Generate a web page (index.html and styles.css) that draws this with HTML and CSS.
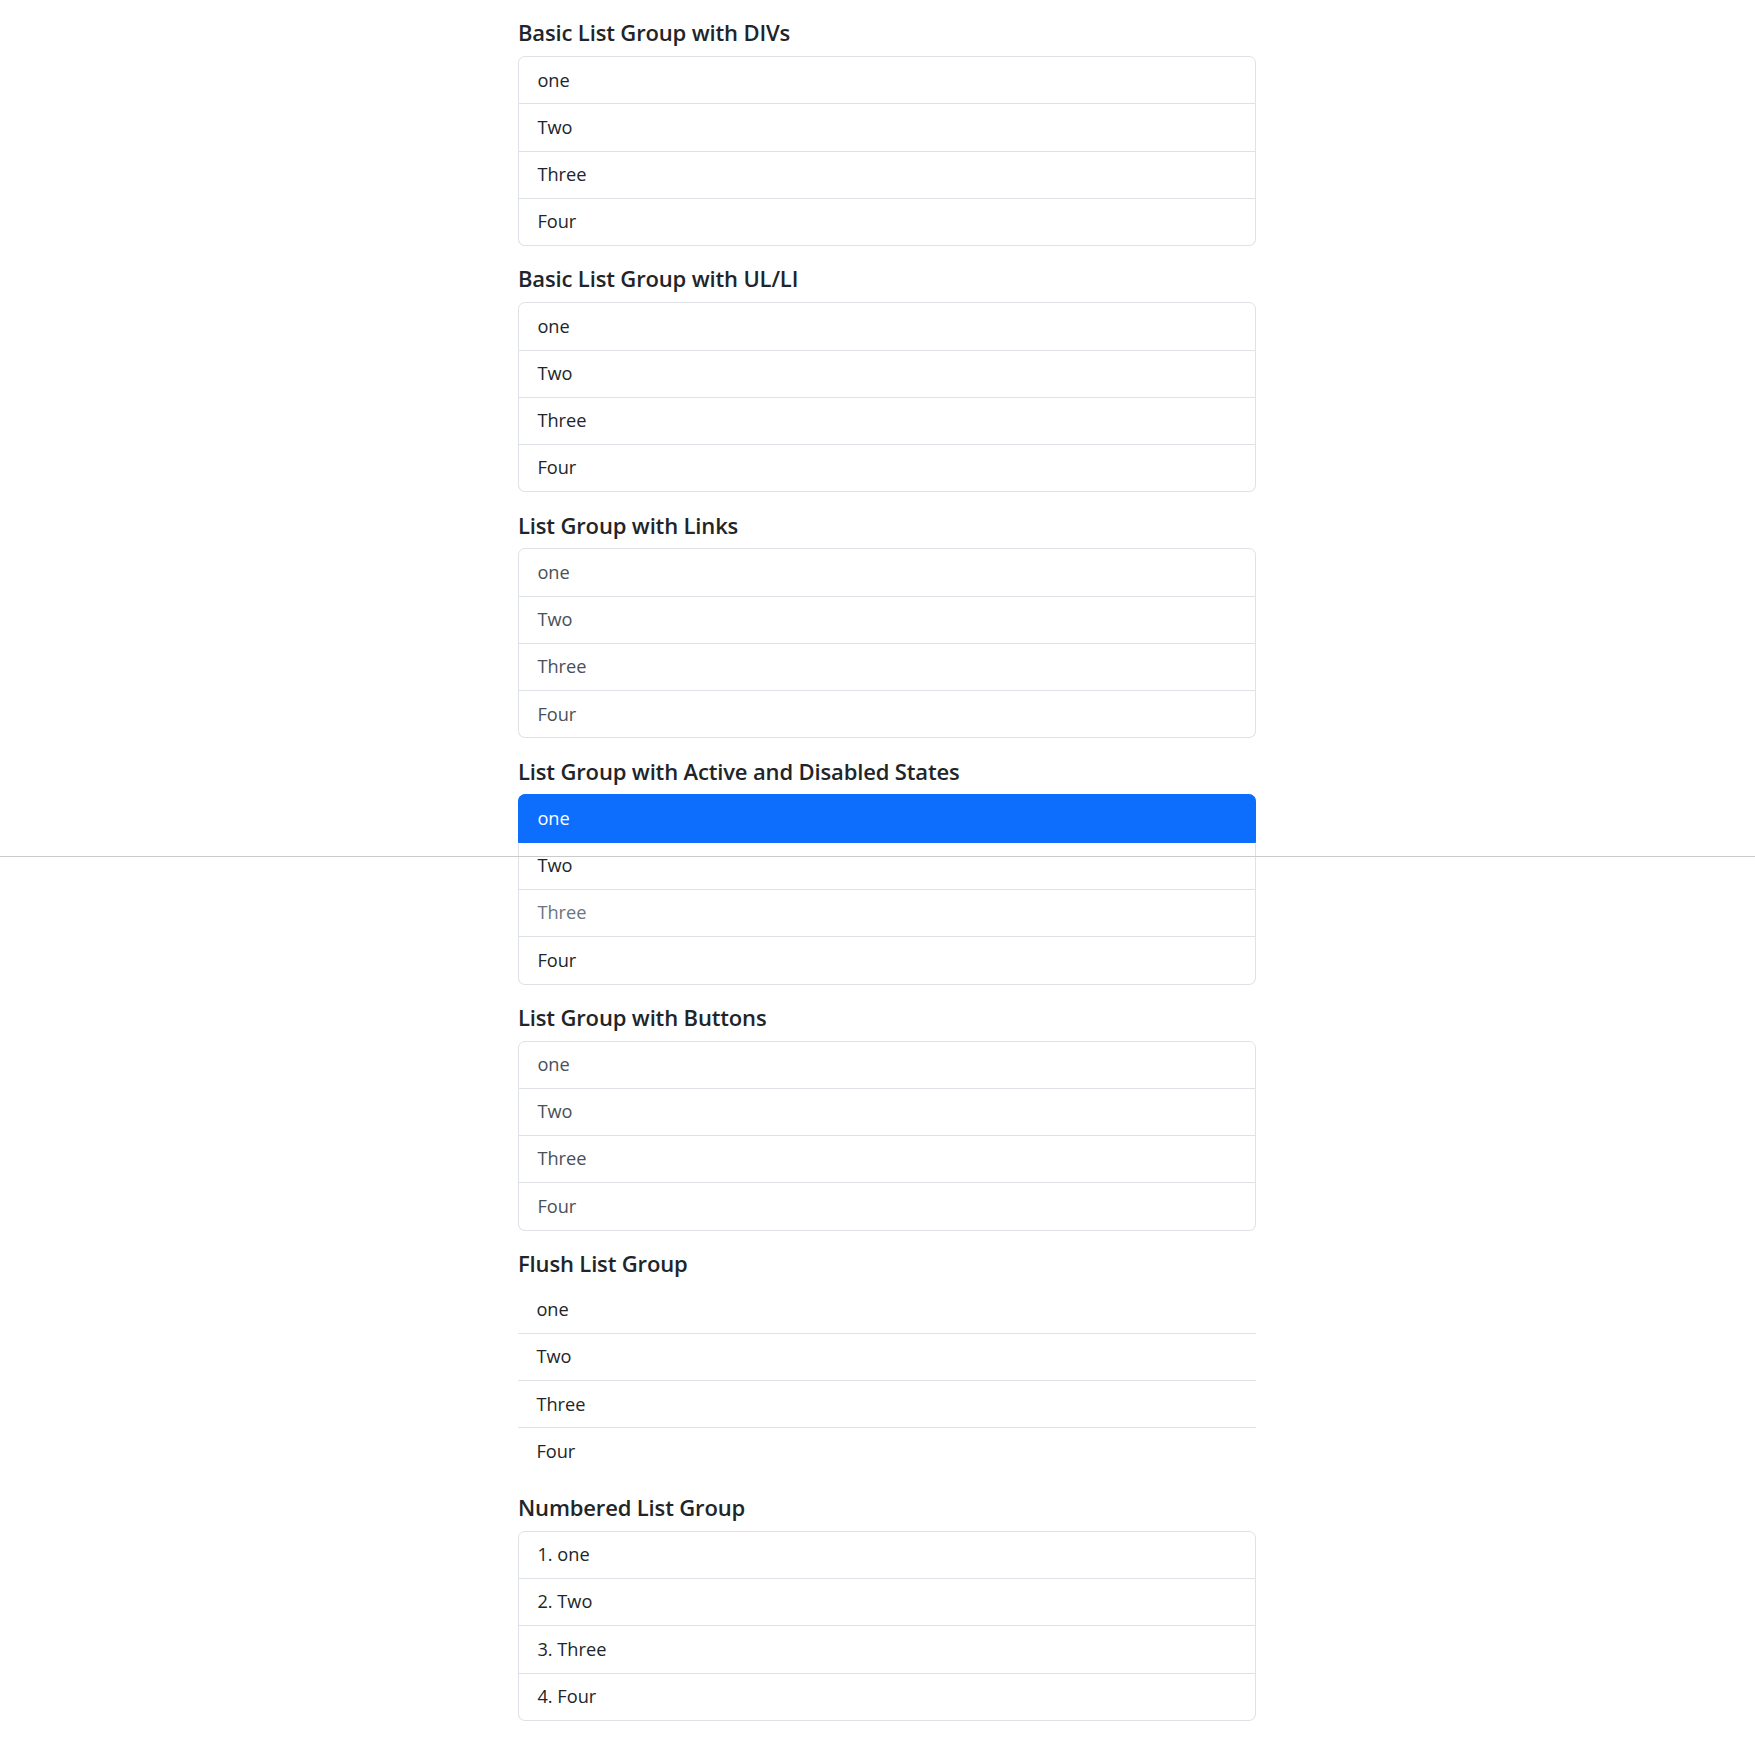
FILE: index.html
```html
<!DOCTYPE html>
<html lang="en">
<head>
<meta charset="utf-8">
<title>List Groups</title>
<link rel="stylesheet" href="styles.css">
</head>
<body>
<div class="page">
  <h5 class="title">Basic List Group with DIVs</h5>
  <div class="list">
    <div class="item">one</div>
    <div class="item">Two</div>
    <div class="item">Three</div>
    <div class="item">Four</div>
  </div>

  <h5 class="title">Basic List Group with UL/LI</h5>
  <ul class="list">
    <li class="item">one</li>
    <li class="item">Two</li>
    <li class="item">Three</li>
    <li class="item">Four</li>
  </ul>

  <h5 class="title">List Group with Links</h5>
  <div class="list">
    <a href="#" class="item action">one</a>
    <a href="#" class="item action">Two</a>
    <a href="#" class="item action">Three</a>
    <a href="#" class="item action">Four</a>
  </div>

  <h5 class="title">List Group with Active and Disabled States</h5>
  <ul class="list">
    <li class="item active">one</li>
    <li class="item">Two</li>
    <li class="item disabled">Three</li>
    <li class="item">Four</li>
  </ul>

  <h5 class="title">List Group with Buttons</h5>
  <div class="list">
    <button type="button" class="item action">one</button>
    <button type="button" class="item action">Two</button>
    <button type="button" class="item action">Three</button>
    <button type="button" class="item action">Four</button>
  </div>

  <h5 class="title">Flush List Group</h5>
  <ul class="list flush">
    <li class="item">one</li>
    <li class="item">Two</li>
    <li class="item">Three</li>
    <li class="item">Four</li>
  </ul>

  <h5 class="title">Numbered List Group</h5>
  <ol class="list numbered">
    <li class="item">one</li>
    <li class="item">Two</li>
    <li class="item">Three</li>
    <li class="item">Four</li>
  </ol>
</div>
<div class="divider"></div>
</body>
</html>
```
FILE: styles.css
```css
html, body {
  margin: 0;
  padding: 0;
  background: #fff;
}
body {
  font-family: "Open Sans", "Noto Sans", "Liberation Sans", sans-serif;
  color: #212529;
  font-size: 18.2px;
  line-height: 27.6px;
}
.page {
  width: 738px;
  margin-left: 518px;
  padding-top: 19.4px;
}
.title {
  font-size: 22px;
  font-weight: 600;
  letter-spacing: -0.15px;
  line-height: 27.6px;
  margin: 0 0 9.2px 0;
  color: #212529;
}
.list {
  display: flex;
  flex-direction: column;
  margin: 0 0 19.2px 0;
  padding: 0;
  list-style: none;
}
.item {
  display: block;
  box-sizing: border-box;
  width: 100%;
  padding: 9.35px 18.4px;
  border: 1px solid #dee2e6;
  background: #fff;
  color: #212529;
  text-decoration: none;
  text-align: left;
  font: inherit;
  margin: 0;
}
.item + .item {
  border-top-width: 0;
}
.item:first-child {
  border-top-left-radius: 6.9px;
  border-top-right-radius: 6.9px;
}
.item:last-child {
  border-bottom-left-radius: 6.9px;
  border-bottom-right-radius: 6.9px;
}
.action {
  color: #495057;
  cursor: pointer;
}
.active {
  background: #0d6efd;
  border-color: #0d6efd;
  color: #fff;
}
.disabled {
  color: #6c757d;
}
.flush .item {
  border-width: 0 0 1px 0;
  border-radius: 0;
}
.flush .item:last-child {
  border-bottom-width: 0;
}
.numbered {
  counter-reset: section;
}
.numbered .item::before {
  counter-increment: section;
  content: counter(section) ". ";
}
.divider {
  position: absolute;
  left: 0;
  top: 856px;
  width: 100%;
  height: 1px;
  background: #cbcbcb;
}
```
